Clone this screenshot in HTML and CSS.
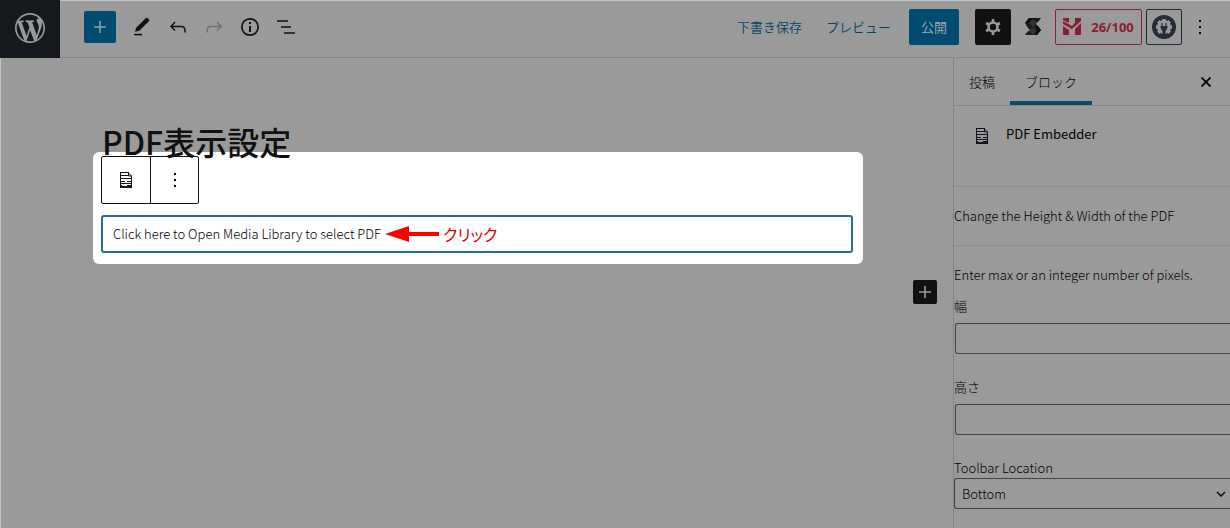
FILE: index.html
```
<!DOCTYPE html>
<html lang="ja">
<head>
    <meta charset="UTF-8">
    <meta name="viewport" content="width=device-width, initial-scale=1.0">
    <title>PDF表示設定</title>
    <link rel="stylesheet" href="styles.css">
</head>
<body>
    <header class="header">
        <a href="#" class="wp-logo" aria-label="WordPress">
            <svg width="30" height="30" viewBox="0 0 20 20" fill="currentColor"><path d="M20 10c0-5.51-4.49-10-10-10C4.48 0 0 4.49 0 10c0 5.52 4.48 10 10 10 5.51 0 10-4.48 10-10zM7.78 15.37L4.37 6.22c.55-.02 1.17-.08 1.17-.08.5-.06.44-1.13-.06-1.11 0 0-1.45.11-2.37.11-.18 0-.37 0-.58-.01C4.12 2.69 6.87 1.11 10 1.11c2.33 0 4.45.87 6.05 2.34-.68-.11-1.65.39-1.65 1.58 0 .74.45 1.36.9 2.1.35.61.55 1.36.55 2.46 0 1.49-1.4 5-1.4 5l-3.03-8.37c.54-.02.82-.17.82-.17.5-.05.44-1.25-.06-1.22 0 0-1.44.12-2.38.12-.87 0-2.33-.12-2.33-.12-.5-.03-.56 1.2-.06 1.22l.92.08 1.26 3.41zM17.41 10c.24-.64.74-1.87.43-4.25.7 1.29 1.05 2.71 1.05 4.25 0 3.29-1.73 6.24-4.4 7.78.97-2.59 1.94-5.2 2.92-7.78zM6.1 18.09C3.12 16.65 1.11 13.53 1.11 10c0-1.3.23-2.48.72-3.59C3.25 10.3 4.67 14.2 6.1 18.09zm4.03-6.63l2.58 6.98c-.86.29-1.76.45-2.71.45-.79 0-1.57-.11-2.29-.33.81-2.38 1.62-4.74 2.42-7.1z"/></svg>
        </a>

        <div class="tools">
            <button class="add-btn" aria-label="ブロックを追加">
                <svg width="24" height="24" viewBox="0 0 24 24" fill="currentColor"><path d="M18 11.2h-5.2V6h-1.6v5.2H6v1.6h5.2V18h1.6v-5.2H18z"/></svg>
            </button>
            <button class="tool-btn" aria-label="ツール">
                <svg width="24" height="24" viewBox="0 0 24 24" fill="currentColor"><path d="M4 18.8h8v1.6H4z"/><path d="M5 16.8l1.200-4L15.800 3.200q.9-.8 1.800 0l1.200 1.200q.8.9 0 1.800L9.200 15.800z"/></svg>
            </button>
            <button class="tool-btn" aria-label="元に戻す">
                <svg width="24" height="24" viewBox="0 0 24 24" fill="currentColor"><path d="M18.300 11.700c-.6-.6-1.400-.9-2.300-.9H6.700l2.900-3.300-1.100-1-4.500 5L8.500 16l1-1-2.700-2.700H16c.5 0 .9.2 1.300.5 1 1 1 3.400 1 4.500v.3h1.500v-.2c0-1.500 0-4.300-1.500-5.700z"/></svg>
            </button>
            <button class="tool-btn" aria-label="やり直す" disabled>
                <svg width="24" height="24" viewBox="0 0 24 24" fill="currentColor"><path d="M15.600 6.500l-1.100 1 2.900 3.300H8c-.9 0-1.700.3-2.300.9-1.400 1.500-1.400 4.200-1.400 5.600v.2h1.500v-.3c0-1.100 0-3.500 1-4.500.3-.3.7-.5 1.300-.5h9.200L14.500 15l1.100 1.100 4.600-4.600-4.600-5z"/></svg>
            </button>
            <button class="tool-btn" aria-label="詳細">
                <svg width="24" height="24" viewBox="0 0 24 24"><circle cx="12" cy="12" r="8.200" fill="none" stroke="currentColor" stroke-width="1.700"/><path d="M11 7h2v2h-2zM11 11h2v6h-2z" fill="currentColor"/></svg>
            </button>
            <button class="tool-btn" aria-label="リスト表示">
                <svg width="24" height="24" viewBox="0 0 24 24" fill="currentColor"><path d="M3 5.200h11v1.600H3zM7 11.200h10v1.600H7zM10 17.200h11v1.600H10z"/></svg>
            </button>
        </div>

        <div class="settings">
            <button class="link-btn">下書き保存</button>
            <button class="link-btn">プレビュー</button>
            <button class="publish-btn">公開</button>
            <button class="gear-btn" aria-label="設定">
                <svg width="24" height="24" viewBox="0 0 24 24" fill="none" stroke="currentColor"><circle cx="12" cy="12" r="4.500" stroke-width="2.600"/><path d="M12 4v3M12 17v3M5.100 8l2.600 1.500M16.300 14.500l2.600 1.500M5.100 16l2.600-1.500M16.300 9.500L18.900 8" stroke-width="2.600"/></svg>
            </button>
            <button class="s-btn" aria-label="Stackable">
                <svg width="18" height="18" viewBox="0 0 18 18"><path d="M5 0h12l-3 4-3 1 3 3 3 4-4 5H1l3-4h3l-3-3-3-5z" fill="#1c1c1c"/><path d="M5 0h6L6 5 1 5zM12 8l2 0 3 4-4 5H9l3-4z" fill="#0f0f0f"/><path d="M5 5l4-4 4 4-4 4zM5 13l4-4 4 4-4 4z" fill="#343434"/></svg>
            </button>
            <button class="score-btn">
                <svg width="18" height="18" viewBox="0 0 18 18" fill="currentColor"><path d="M0 0h6v5l-6-3zM12 0h6v3l-9 8-9-5V3l9 5 3-3zM0 8l6 4v5H0zM12 11l6-6v12h-6z"/></svg>
                <span>26/100</span>
            </button>
            <button class="plug-btn" aria-label="プラグイン">
                <svg width="24" height="24" viewBox="0 0 24 24"><circle cx="12" cy="12" r="12" fill="#252b3b"/><g fill="none" stroke="#9a9a9a"><circle cx="12" cy="12" r="5.500" stroke-width="3"/><path d="M12 4v2M4 12h2M18 12h2M6.300 6.300l1.500 1.500M17.700 6.300l-1.500 1.500M6.300 17.700l1.500-1.500M17.700 17.700l-1.500-1.500" stroke-width="3.500"/></g><circle cx="12" cy="12" r="4.500" fill="#9a9a9a"/><path d="M9.500 8h1.200v3h2.600V8h1.200v3h1v2l-2 3v5h-3v-5l-2-3v-2h1z" fill="#252b3b"/></svg>
            </button>
            <button class="more-btn" aria-label="オプション">
                <svg width="24" height="24" viewBox="0 0 24 24" fill="currentColor"><path d="M11 5h2v2h-2zM11 11h2v2h-2zM11 17h2v2h-2z"/></svg>
            </button>
        </div>
    </header>

    <div class="editor">
        <main class="canvas">
            <h1 class="title">PDF表示設定</h1>

            <section class="block-panel">
                <div class="block-toolbar">
                    <button aria-label="PDF Embedder">
                        <svg class="doc-icon" width="12" height="16" viewBox="0 0 12 16" fill="none" stroke="currentColor"><path d="M0 .5h8L11.500 4v9M.5 0v16M0 3.500h8M0 6.500h12M0 9.500h5M7 9.500h5M0 11.500h12M8.500 0v4H12"/><path d="M0 14.500h12" stroke-width="3"/><path d="M2 13.500h5" stroke="#fff"/></svg>
                    </button>
                    <button aria-label="オプション">
                        <svg width="24" height="24" viewBox="0 0 24 24" fill="currentColor"><path d="M11 5h2v2h-2zM11 11h2v2h-2zM11 17h2v2h-2z"/></svg>
                    </button>
                </div>
                <div class="block">
                    <button class="media-btn">Click here to Open Media Library to select PDF</button>
                    <svg width="54" height="16" viewBox="0 0 54 16" fill="#f00"><path d="M0 8L24 0v6h30v4H24v6z"/></svg>
                    <span class="note">クリック</span>
                </div>
            </section>

            <button class="inserter" aria-label="ブロックを追加">
                <svg width="24" height="24" viewBox="0 0 24 24" fill="currentColor"><path d="M18 11.200h-5.200V6h-1.600v5.200H6v1.600h5.200V18h1.600v-5.200H18z"/></svg>
            </button>
        </main>

        <aside class="sidebar">
            <div class="tabs">
                <button class="tab">投稿</button>
                <button class="tab active">ブロック</button>
                <button class="close-btn" aria-label="閉じる">
                    <svg width="10" height="10" viewBox="0 0 10 10" stroke="currentColor" stroke-width="1.700"><path d="M.5.5l9 9M9.500.5l-9 9"/></svg>
                </button>
            </div>
            <div class="block-card">
                <svg class="doc-icon" width="12" height="16" viewBox="0 0 12 16" fill="none" stroke="currentColor"><path d="M0 .5h8L11.500 4v9M.5 0v16M0 3.500h8M0 6.500h12M0 9.500h5M7 9.500h5M0 11.500h12M8.500 0v4H12"/><path d="M0 14.500h12" stroke-width="3"/><path d="M2 13.500h5" stroke="#9a9a9a"/></svg>
                <h2>PDF Embedder</h2>
            </div>
            <div class="heading">Change the Height &amp; Width of the PDF</div>
            <form class="fields">
                <p>Enter max or an integer number of pixels.</p>
                <div class="field">
                    <label for="width">幅</label>
                    <input type="text" id="width" name="width">
                </div>
                <div class="field">
                    <label for="height">高さ</label>
                    <input type="text" id="height" name="height">
                </div>
                <div class="field select-field">
                    <label for="toolbar">Toolbar Location</label>
                    <div class="select-wrap">
                        <select id="toolbar" name="toolbar">
                            <option>Bottom</option>
                            <option>Top</option>
                        </select>
                        <svg width="10" height="6" viewBox="0 0 10 6" fill="none" stroke="#111" stroke-width="1.600"><path d="M1 1l4 4 4-4"/></svg>
                    </div>
                </div>
            </form>
        </aside>
    </div>
</body>
</html>
```
FILE: styles.css
```
* {
    box-sizing: border-box;
}

body {
    margin: 0;
    min-height: 100vh;
    display: flex;
    flex-direction: column;
    overflow: hidden;
    background-color: #9a9a9a;
    color: #000;
    font-family: "Noto Sans CJK JP", sans-serif;
    font-size: 13px;
    font-weight: 300;
    line-height: 20px;
}

button {
    display: flex;
    align-items: center;
    justify-content: center;
    padding: 0;
    border: none;
    border-radius: 2px;
    background: none;
    color: inherit;
    font: inherit;
    white-space: nowrap;
    cursor: pointer;
}

svg {
    display: block;
    flex: none;
}

/* header */
.header {
    display: flex;
    height: 58px;
    border-top: 1px solid #c4c4c4;
    border-bottom: 1px solid #868686;
}

.wp-logo {
    display: flex;
    align-items: center;
    justify-content: center;
    width: 60px;
    height: 58px;
    margin-top: -1px;
    padding-bottom: 2px;
    background-color: #15181d;
    color: #9a9a9a;
}

.tools,
.settings {
    display: flex;
    align-items: center;
    padding-bottom: 4px;
}

.tools {
    padding-left: 24px;
}

.tool-btn {
    width: 36px;
    height: 36px;
    color: #111;
}

.tool-btn:disabled {
    color: #707070;
}

.add-btn {
    width: 32px;
    height: 32px;
    margin-right: 8px;
    background-color: #004b70;
    color: #9a9a9a;
}

.settings {
    margin-left: auto;
    padding-right: 18px;
}

.link-btn {
    margin-right: 24px;
    color: #004566;
    font-weight: 350;
}

.link-btn + .publish-btn {
    margin-left: -6px;
}

.publish-btn {
    width: 50px;
    height: 36px;
    margin-right: 16px;
    background-color: #004b70;
    color: #a0a8ac;
    font-weight: 400;
}

.gear-btn {
    width: 36px;
    height: 36px;
    background-color: #111;
    color: #9a9a9a;
}

.s-btn {
    width: 44px;
    height: 36px;
}

.score-btn {
    gap: 10px;
    width: 87px;
    height: 36px;
    margin-right: 4px;
    border: 1px solid #8a2138;
    color: #8a1c33;
    font-family: "Noto Sans", sans-serif;
    font-weight: bold;
}

.plug-btn {
    width: 36px;
    height: 36px;
    margin-right: 6px;
    border: 1px solid #252b3b;
}

.more-btn {
    width: 24px;
    height: 36px;
}

/* editor */
.editor {
    flex: 1;
    display: flex;
}

.canvas {
    flex: 1;
    min-width: 0;
    padding: 67px 16px 0 92px;
    border-left: 1px solid #c4c4c4;
}

.title {
    position: relative;
    z-index: 1;
    margin: 0 9px -5px;
    color: #111;
    font-size: 32px;
    font-weight: 500;
    line-height: 32px;
}

.block-panel {
    margin-right: 74px;
    padding: 4px 10px 11px 8px;
    border-radius: 6px;
    background-color: #fff;
}

.block-toolbar {
    display: flex;
    width: fit-content;
    border: 1px solid #111;
    border-radius: 2px;
    background-color: #fff;
}

.block-toolbar button {
    width: 48px;
    height: 46px;
    border-radius: 0;
}

.block-toolbar button + button {
    border-left: 1px solid #111;
}

.doc-icon {
    color: #15131a;
}

.block {
    display: flex;
    align-items: center;
    gap: 4px;
    height: 38px;
    margin-top: 11px;
    padding-left: 10px;
    border: 2px solid #2a6f88;
    border-radius: 3px;
}

.note {
    color: #e00000;
    font-size: 16px;
    font-weight: 400;
    font-feature-settings: "palt";
}

.inserter {
    width: 24px;
    height: 24px;
    margin: 16px 0 0 auto;
    background-color: #111;
    color: #9a9a9a;
}

/* sidebar */
.sidebar {
    width: 277px;
    border-left: 1px solid #858585;
    overflow: hidden;
}

.tabs {
    display: flex;
    height: 48px;
    border-bottom: 1px solid #868686;
}

.tab {
    width: 56px;
    border-radius: 0;
}

.tab.active {
    width: 82px;
    border-top: 4px solid transparent;
    border-bottom: 4px solid #0c4b68;
}

.close-btn {
    width: 48px;
    margin-left: auto;
}

.block-card {
    display: flex;
    gap: 18px;
    height: 81px;
    padding: 18px 22px;
    border-bottom: 1px solid #8c8c8c;
}

.block-card svg {
    margin-top: 4px;
}

.block-card h2 {
    margin: 0;
    font-size: 13px;
    font-weight: 400;
}

.heading {
    padding: 19px 0;
    border-bottom: 1px solid #8c8c8c;
    white-space: nowrap;
}

.fields p {
    margin: 19px 0 11px;
    white-space: nowrap;
}

.field {
    display: flex;
    flex-direction: column;
    gap: 7px;
    margin-bottom: 23px;
}

.field input,
.field select {
    width: 100%;
    height: 31px;
    border: 1px solid #444;
    border-right: none;
    border-radius: 3px 0 0 3px;
    background-color: transparent;
    color: #000;
    font: inherit;
}

.field input {
    margin-left: 1px;
    padding: 0 8px;
}

.select-field {
    gap: 0;
}

.select-wrap {
    display: grid;
    align-items: center;
}

.select-wrap > * {
    grid-area: 1 / 1;
}

.select-wrap svg {
    justify-self: end;
    margin-right: 4px;
    pointer-events: none;
}

.field select {
    padding: 0 24px 0 7px;
    appearance: none;
}
```
